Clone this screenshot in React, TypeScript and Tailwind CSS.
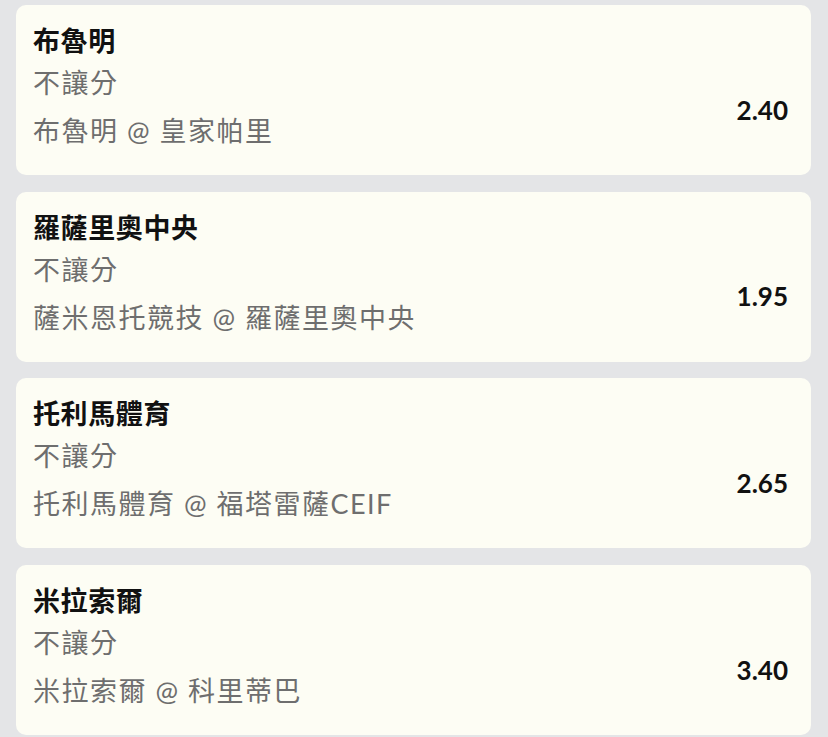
import React from 'react';

type Pick = { team: string; market: string; match: string; odds: string };

const picks: Pick[] = [
  { team: '布魯明', market: '不讓分', match: '布魯明 @ 皇家帕里', odds: '2.40' },
  { team: '羅薩里奧中央', market: '不讓分', match: '薩米恩托競技 @ 羅薩里奧中央', odds: '1.95' },
  { team: '托利馬體育', market: '不讓分', match: '托利馬體育 @ 福塔雷薩CEIF', odds: '2.65' },
  { team: '米拉索爾', market: '不讓分', match: '米拉索爾 @ 科里蒂巴', odds: '3.40' },
];

const font = { fontFamily: '"Lato", "Noto Sans CJK TC", sans-serif' };

function PickCard({ pick }: { pick: Pick }) {
  return (
    <div className="h-[170px] rounded-[10px] bg-[#fdfdf4] pl-[17px] pr-[23px] pt-[18px]">
      <div className="text-[27px] font-bold leading-[36px] tracking-[0.6px] text-[#111111]">{pick.team}</div>
      <div className="flex items-center justify-between">
        <div className="text-[27px] leading-[48px] tracking-[1.5px] text-[#6e6e6e]">
          <div>{pick.market}</div>
          <div>{pick.match}</div>
        </div>
        <div className="mt-[6px] text-[26px] font-bold text-[#111111]">{pick.odds}</div>
      </div>
    </div>
  );
}

export default function App() {
  return (
    <div className="h-[737px] w-[828px] overflow-hidden bg-[#e4e5e7] pl-[16px] pr-[17px] pt-[5px]" style={font}>
      <div className="flex flex-col gap-[16.7px]">
        {picks.map((p) => (
          <PickCard key={p.team} pick={p} />
        ))}
      </div>
    </div>
  );
}
